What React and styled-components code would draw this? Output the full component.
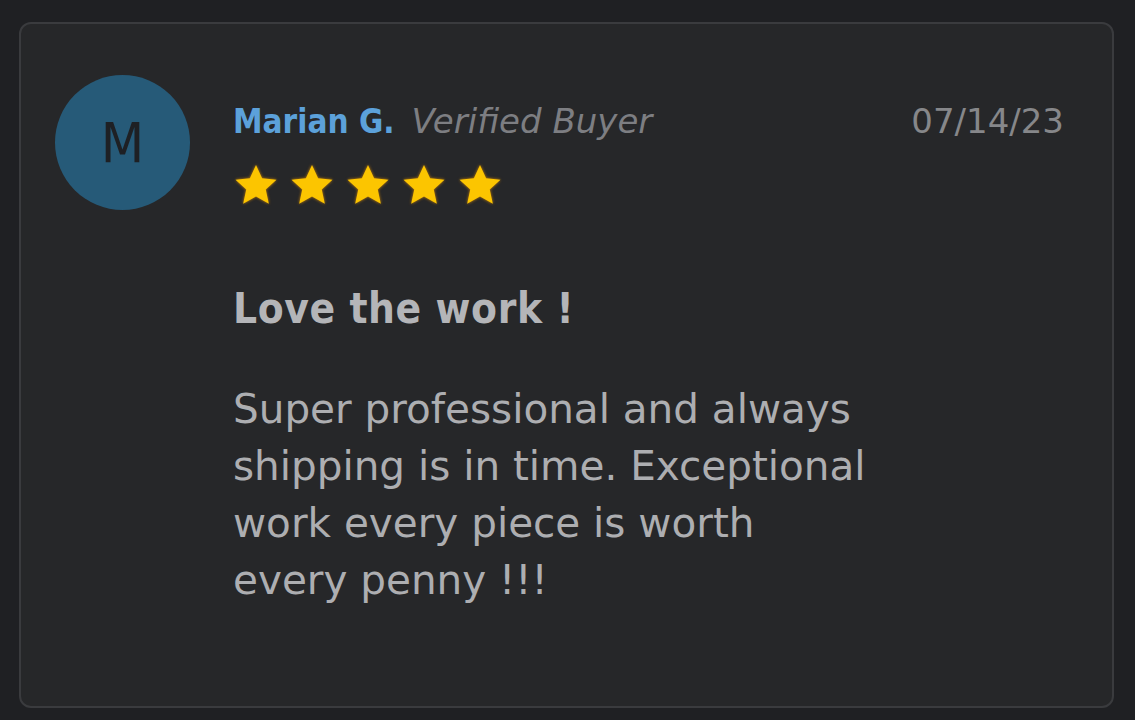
import React from "react";
import styled, { createGlobalStyle } from "styled-components";

const GlobalStyle = createGlobalStyle`
	html, body {
		margin: 0;
		padding: 0;
		background: #1f2023;
	}
	body {
		font-family: "DejaVu Sans", sans-serif;
	}
`;

const review = {
	name: "Marian G.",
	initial: "M",
	date: "07/14/23",
	rating: 5,
	title: "Love the work !",
	body: "Super professional and always shipping is in time. Exceptional work every piece is worth every penny !!!",
};

function Star() {
	return (
		<StarIcon viewBox="0 0 24 24">
			<path d="M12 1.6l3.2 6.9 7.5.8-5.6 5.1 1.6 7.4L12 18l-6.7 3.8 1.6-7.4-5.6-5.1 7.5-.8z" />
		</StarIcon>
	);
}

function App() {
	return (
		<Page>
			<GlobalStyle />
			<Card>
				<Avatar>{review.initial}</Avatar>
				<Content>
					<Header>
						<Author>
							<Name>{review.name}</Name>
							<Badge>Verified Buyer</Badge>
						</Author>
						<DateText>{review.date}</DateText>
					</Header>
					<Stars>
						{Array.from({ length: review.rating }).map((_, i) => (
							<Star key={i} />
						))}
					</Stars>
					<Title>{review.title}</Title>
					<Body>{review.body}</Body>
				</Content>
			</Card>
		</Page>
	);
}

const Page = styled.div`
	padding: 22px 21px 12px 19px;
	height: 720px;
	box-sizing: border-box;
`;
const Card = styled.div`
	display: flex;
	align-items: flex-start;
	gap: 43px;
	height: 686px;
	box-sizing: border-box;
	padding: 51px 48px 0 34px;
	background: #262729;
	border: 2px solid #3a3b3e;
	border-radius: 12px;
`;
const Avatar = styled.div`
	flex: none;
	width: 135px;
	height: 135px;
	border-radius: 50%;
	background: #265a78;
	color: #1e2024;
	display: flex;
	align-items: center;
	justify-content: center;
	font-family: "DejaVu Sans Condensed", "DejaVu Sans", sans-serif;
	font-size: 56px;
	line-height: 1;
`;
const Content = styled.div`
	flex: 1;
	padding-top: 26px;
`;
const Header = styled.div`
	display: flex;
	justify-content: space-between;
	align-items: baseline;
	line-height: 40px;
`;
const Author = styled.div`
	display: flex;
	align-items: baseline;
	gap: 17px;
`;
const Name = styled.span`
	font-family: "DejaVu Sans Condensed", "DejaVu Sans", sans-serif;
	font-size: 33px;
	font-weight: bold;
	color: #5ca1da;
`;
const Badge = styled.span`
	font-size: 34px;
	font-style: italic;
	color: #7d7e82;
`;
const DateText = styled.span`
	font-size: 34px;
	color: #86878a;
`;
const Stars = styled.div`
	display: flex;
	gap: 10px;
	margin-top: 20px;
`;
const StarIcon = styled.svg`
	display: block;
	width: 46px;
	height: 46px;
	fill: #fcc500;
	filter: drop-shadow(0 0 1.5px rgba(220, 140, 0, 0.9));
`;
const Title = styled.h2`
	margin: 76px 0 0;
	font-family: "DejaVu Sans Condensed", "DejaVu Sans", sans-serif;
	font-size: 42px;
	font-weight: bold;
	letter-spacing: 0.6px;
	color: #b4b5b8;
	line-height: 50px;
`;
const Body = styled.p`
	margin: 47px 0 0;
	max-width: 640px;
	font-size: 40.5px;
	line-height: 57px;
	color: #adaeb1;
`;

export default App;
